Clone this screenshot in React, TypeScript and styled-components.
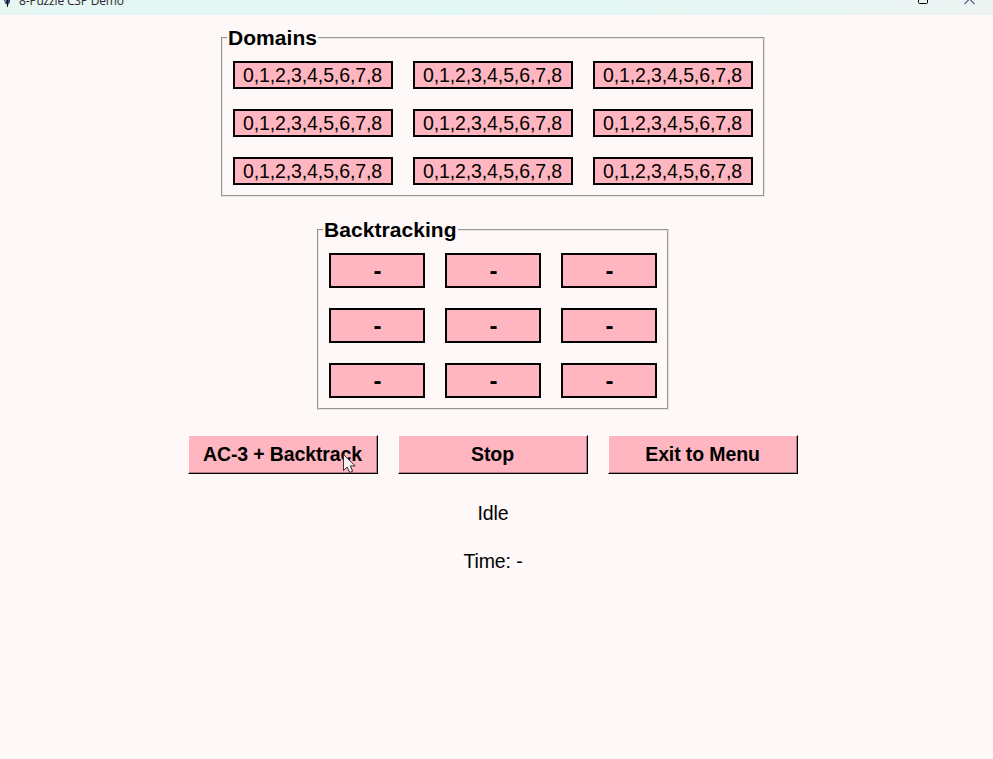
import React from "react";
import styled, { createGlobalStyle } from "styled-components";

const GlobalStyle = createGlobalStyle`
  * { box-sizing: border-box; }
  body {
    margin: 0;
    background: #fff8f8;
    color: #000;
    font-family: "Liberation Sans", Arial, sans-serif;
    font-size: 19.5px;
    overflow: hidden;
  }
`;

const Window = styled.div`
  width: 993px;
  height: 759px;
  overflow: hidden;
  background: #fff8f8;
`;

const TitleBar = styled.header`
  display: flex;
  align-items: flex-start;
  height: 15px;
  overflow: hidden;
  background: linear-gradient(90deg, #e5f6f3 0%, #e2f8f4 45%, #e8f5f3 85%, #edf3f2 100%);
`;

const AppIcon = styled.svg`
  flex: none;
  width: 9px;
  height: 8px;
  margin-left: 3px;
`;

const Title = styled.span`
  flex: 1;
  margin: -7px 0 0 7px;
  font: 12px/15px "Open Sans", sans-serif;
  letter-spacing: -0.17px;
  color: #30232d;
`;

const Controls = styled.svg`
  flex: none;
  width: 93px;
  height: 6px;
`;

const Content = styled.main`
  display: flex;
  flex-direction: column;
  align-items: center;
  width: 986px;
  padding-top: 22px;
`;

const Frame = styled.section<{ $width: number }>`
  width: ${(p) => p.$width}px;
  border: 1px solid #999595;
  border-right-color: #e9e3e3;
  border-bottom-color: #e9e3e3;
  margin-bottom: 32px;
`;

const FrameInner = styled.div`
  border: 1px solid #e9e3e3;
  border-right-color: #999595;
  border-bottom-color: #999595;
  padding: 0 10px 10px;
`;

const FrameTitle = styled.h2<{ $width: number }>`
  width: ${(p) => p.$width}px;
  height: 24px;
  margin: -13px 0 11px -6px;
  padding-left: 1px;
  background: #fff8f8;
  font-size: 21px;
  line-height: 24px;
  letter-spacing: 0.06px;
  white-space: nowrap;
`;

const Grid = styled.div<{ $cell: number }>`
  display: grid;
  grid-template-columns: repeat(3, ${(p) => p.$cell}px);
  gap: 20px;
`;

const Cell = styled.div<{ $large?: boolean }>`
  display: flex;
  align-items: center;
  justify-content: center;
  height: ${(p) => (p.$large ? 35 : 28)}px;
  padding-top: ${(p) => (p.$large ? 0 : 1)}px;
  padding-left: ${(p) => (p.$large ? 1 : 0)}px;
  padding-right: ${(p) => (p.$large ? 0 : 1)}px;
  border: 2px solid #000;
  background: #ffb6c1;
  font-size: ${(p) => (p.$large ? 24 : 19.5)}px;
  font-weight: ${(p) => (p.$large ? 700 : 400)};
  line-height: 23px;
  letter-spacing: ${(p) => (p.$large ? 0 : -0.12)}px;
`;

const Toolbar = styled.div`
  display: flex;
  gap: 20px;
  margin-top: -7px;
`;

const Button = styled.button`
  width: 190px;
  height: 39px;
  padding: 0 1px 1px 0;
  border: 1px solid;
  border-color: #fff #000 #000 #fff;
  box-shadow: inset -1px -1px #b37f87;
  background: #ffb6c1;
  color: #000;
  font: bold 19.5px "Liberation Sans", Arial, sans-serif;
  letter-spacing: -0.12px;
  position: relative;
`;

const Pointer = styled.svg`
  position: absolute;
  left: 153px;
  top: 17px;
  width: 14px;
  height: 21px;
`;

const Status = styled.p`
  height: 24px;
  margin: 0 0 24px;
  line-height: 24px;
  letter-spacing: -0.12px;
`;

const StatusArea = styled.div`
  padding-top: 27px;
  text-align: center;
`;

const positions = Array.from({ length: 9 }, (_, i) => i);

export default function App() {
  return (
    <>
      <GlobalStyle />
      <Window>
        <TitleBar>
          <AppIcon viewBox="0 0 9 8">
            <path d="M1 0h6v2L5 5v2H4V5L2 3z" fill="#28416e" />
            <path d="M4 0h1v7H4z" fill="#160f25" />
            <path d="M2 0h1v2H2z" fill="#7697bd" />
          </AppIcon>
          <Title>8-Puzzle CSP Demo</Title>
          <Controls viewBox="0 0 93 6" fill="none">
            <path d="M18.5 0v2.5q0 1 1 1h7q1 0 1-1V0" stroke="#000" />
            <path d="M64.5 4L69.5-1L74.5 4" stroke="#536490" strokeWidth="1.2" />
          </Controls>
        </TitleBar>
        <Content>
          <Frame $width={544}>
            <FrameInner>
              <FrameTitle $width={91}>Domains</FrameTitle>
              <Grid $cell={160}>
                {positions.map((i) => <Cell key={i}>0,1,2,3,4,5,6,7,8</Cell>)}
              </Grid>
            </FrameInner>
          </Frame>
          <Frame $width={352}>
            <FrameInner>
              <FrameTitle $width={135}>Backtracking</FrameTitle>
              <Grid $cell={96}>
                {positions.map((i) => <Cell key={i} $large>-</Cell>)}
              </Grid>
            </FrameInner>
          </Frame>
          <Toolbar>
            <Button>
              AC-3 + Backtrack
              <Pointer viewBox="0 0 14 21">
                <path d="M1.5 1.5v16l3.7-3.4 2.5 5.4 3-1.3-2.4-5.3h5z" fill="#f4eff1" stroke="#332c36" />
              </Pointer>
            </Button>
            <Button>Stop</Button>
            <Button>Exit to Menu</Button>
          </Toolbar>
          <StatusArea>
            <Status>Idle</Status>
            <Status>Time: -</Status>
          </StatusArea>
        </Content>
      </Window>
    </>
  );
}
